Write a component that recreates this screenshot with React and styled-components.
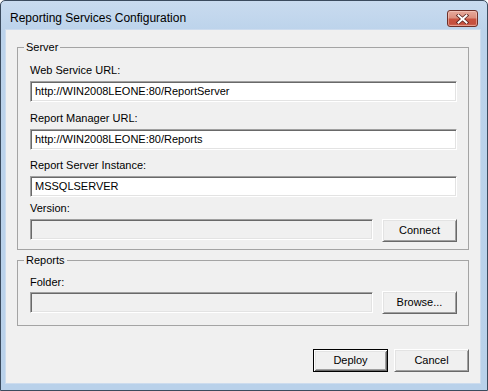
import React from "react";
import styled, { createGlobalStyle } from "styled-components";

const Global = createGlobalStyle`
  html, body { margin: 0; padding: 0; background: #ffffff; }
  body { font-family: "Liberation Sans", Arial, sans-serif; font-size: 11px; color: #000; }
  * { box-sizing: border-box; }
`;

const Window = styled.div`
  width: 488px;
  height: 391px;
  border: 1px solid #3b4b5e;
  border-radius: 5px 5px 0 0;
  background: linear-gradient(to bottom, #c9dbef 0px, #bcd3eb 30px, #b9d1ea 100%);
  display: flex;
  flex-direction: column;
  overflow: hidden;
`;

const TitleBar = styled.div`
  height: 29px;
  flex: none;
  display: flex;
  align-items: flex-start;
  justify-content: space-between;
  padding: 0 9px 0 9px;
`;

const Title = styled.div`
  margin-top: 10px;
  font-size: 12px;
  line-height: 14px;
  color: #000;
`;

const CloseButton = styled.div`
  margin-top: 9px;
  width: 31px;
  height: 17px;
  border: 1px solid #6e3029;
  border-radius: 3px;
  background: linear-gradient(to bottom, #e7aa9c 0%, #dc8f7e 45%, #c9523f 55%, #c5503f 85%, #d4705d 100%);
  box-shadow: inset 0 0 0 1px rgba(255, 220, 210, 0.45);
  display: flex;
  align-items: center;
  justify-content: center;
`;

const Client = styled.div`
  flex: 1;
  margin: 0 7px 7px 5px;
  background: #f0f0f0;
  box-shadow: 0 0 0 1px #cddcee;
  padding: 11px 11px 0 11px;
  display: flex;
  flex-direction: column;
`;

const Group = styled.fieldset`
  margin: ${(p) => p.$mt || 0}px 0 0 0;
  padding: ${(p) => p.$pt}px 11px ${(p) => p.$pb}px 12px;
  border: 1px solid #a4a4a4;
  min-width: 0;
  display: flex;
  flex-direction: column;
`;

const Legend = styled.legend`
  padding: 0 2px;
  margin-left: -6px;
  font-size: 11px;
  line-height: 13px;
`;

const Field = styled.div`
  display: flex;
  flex-direction: column;
  margin-top: ${(p) => p.$mt || 0}px;
`;

const Label = styled.label`
  display: block;
  line-height: 13px;
  font-size: 11px;
  margin-bottom: ${(p) => (p.$gap === undefined ? 4 : p.$gap)}px;
`;

const Row = styled.div`
  display: flex;
  align-items: ${(p) => p.$align || "flex-start"};
  gap: 9px;
`;

const TextBox = styled.input`
  flex: ${(p) => (p.$grow ? "1 1 0" : "none")};
  min-width: 0;
  width: ${(p) => (p.$grow ? "auto" : "100%")};
  height: 21px;
  margin: 0;
  padding: 0 4px 2px 4px;
  font-family: "Liberation Sans", Arial, sans-serif;
  font-size: 11px;
  color: #000;
  background: ${(p) => (p.disabled ? "#f0f0f0" : "#ffffff")};
  border: 1px solid;
  border-color: #a0a0a0 #ffffff #ffffff #a0a0a0;
  box-shadow: inset 1px 1px #696969, inset -1px -1px #e3e3e3;
  outline: none;
`;

const Button = styled.button`
  width: 75px;
  height: 23px;
  flex: none;
  margin: 0;
  padding: 0 0 1px 0;
  font-family: "Liberation Sans", Arial, sans-serif;
  font-size: 11px;
  color: #000;
  background: #f0f0f0;
  border: 1px solid;
  border-color: ${(p) => (p.$primary ? "#000 #000 #000 #000" : "#ffffff #696969 #696969 #ffffff")};
  box-shadow: ${(p) =>
    p.$primary
      ? "inset 1px 1px #ffffff, inset -1px -1px #696969, inset 2px 2px #e3e3e3, inset -2px -2px #a0a0a0"
      : "inset 1px 1px #e3e3e3, inset -1px -1px #a0a0a0"};
  border-radius: 0;
`;

const Footer = styled.div`
  margin-top: 23px;
  display: flex;
  justify-content: flex-end;
  gap: 6px;
`;

function CloseGlyph() {
  return (
    <svg width="13" height="10" viewBox="0 0 13 10">
      <path d="M2.5 1.5 L10.5 8.5 M10.5 1.5 L2.5 8.5" stroke="#5a2420" strokeWidth="3.6" strokeLinecap="square" fill="none" />
      <path d="M2.5 1.5 L10.5 8.5 M10.5 1.5 L2.5 8.5" stroke="#ffffff" strokeWidth="2" strokeLinecap="square" fill="none" />
    </svg>
  );
}

export default function App() {
  return (
    <>
      <Global />
      <Window>
        <TitleBar>
          <Title>Reporting Services Configuration</Title>
          <CloseButton>
            <CloseGlyph />
          </CloseButton>
        </TitleBar>
        <Client>
          <Group $pt={10} $pb={7}>
            <Legend>Server</Legend>
            <Field>
              <Label>Web Service URL:</Label>
              <TextBox readOnly value="http://WIN2008LEONE:80/ReportServer" />
            </Field>
            <Field $mt={10}>
              <Label>Report Manager URL:</Label>
              <TextBox readOnly value="http://WIN2008LEONE:80/Reports" />
            </Field>
            <Field $mt={9}>
              <Label>Report Server Instance:</Label>
              <TextBox readOnly value="MSSQLSERVER" />
            </Field>
            <Field $mt={5}>
              <Label>Version:</Label>
              <Row>
                <TextBox $grow disabled value="" />
                <Button>Connect</Button>
              </Row>
            </Field>
          </Group>
          <Group $mt={4} $pt={9} $pb={11}>
            <Legend>Reports</Legend>
            <Field>
              <Label $gap={2}>Folder:</Label>
              <Row $align="center">
                <TextBox $grow disabled value="" />
                <Button>Browse...</Button>
              </Row>
            </Field>
          </Group>
          <Footer>
            <Button $primary>Deploy</Button>
            <Button>Cancel</Button>
          </Footer>
        </Client>
      </Window>
    </>
  );
}
